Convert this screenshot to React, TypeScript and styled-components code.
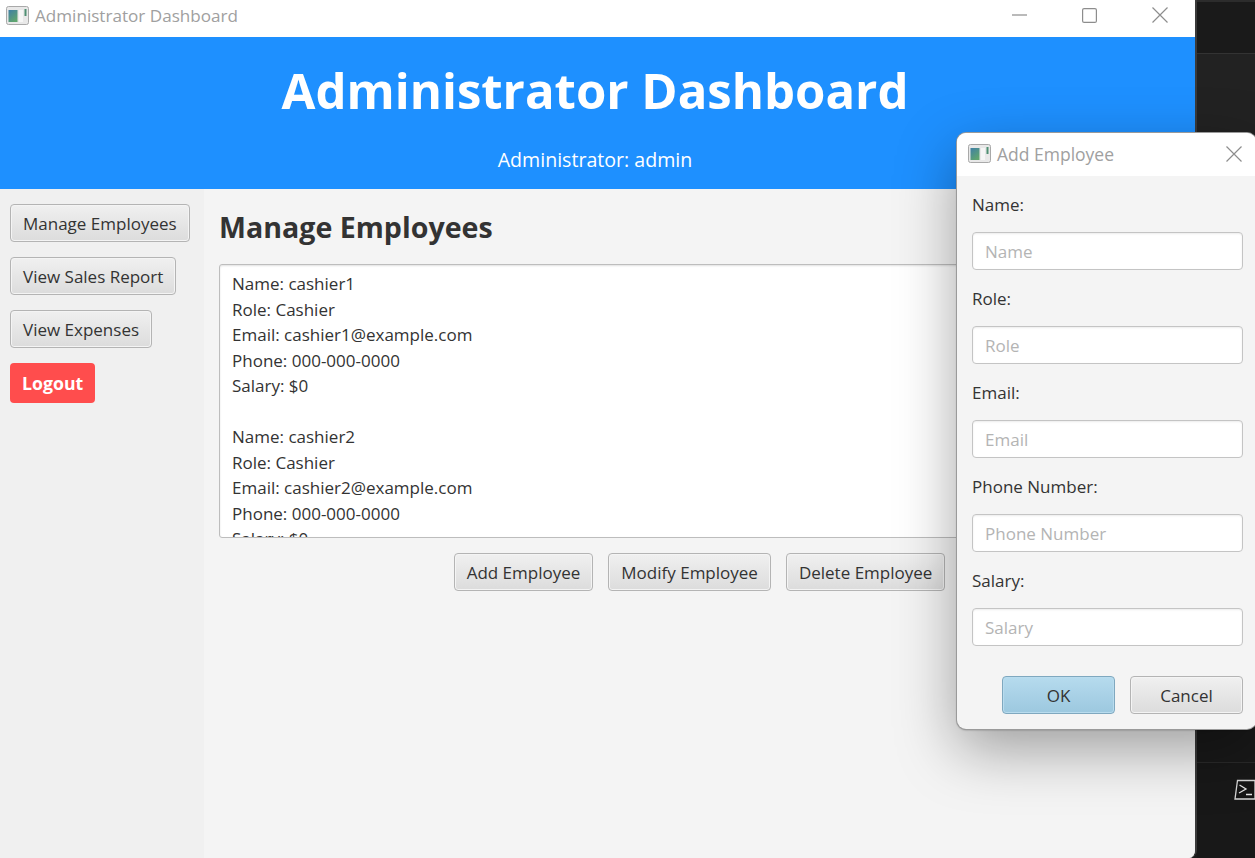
import styled, { createGlobalStyle } from "styled-components";

const GlobalStyle = createGlobalStyle`
  html, body {
    margin: 0;
    padding: 0;
    background: #1b1b1b;
  }
  * {
    box-sizing: border-box;
  }
`;

const FONT = `"Open Sans", "Noto Sans", "Liberation Sans", sans-serif`;

const employees = [
  { name: "cashier1", email: "cashier1@example.com" },
  { name: "cashier2", email: "cashier2@example.com" },
];

const fields = ["Name", "Role", "Email", "Phone Number", "Salary"];

function AppIcon() {
  return (
    <svg width="23" height="19" viewBox="0 0 23 19">
      <defs>
        <linearGradient id="appIconFill" x1="0" y1="0" x2="0.6" y2="1">
          <stop offset="0" stopColor="#3f7fa6" />
          <stop offset="1" stopColor="#5fa56f" />
        </linearGradient>
      </defs>
      <rect x="0.5" y="0.5" width="22" height="18" rx="2" fill="#e8e8e8" stroke="#a9a9a9" />
      <rect x="2.5" y="4" width="9" height="12" fill="url(#appIconFill)" />
      <rect x="13" y="4" width="4" height="12" fill="#f6f6f6" />
      <rect x="18.5" y="3" width="2" height="7" fill="#4f8f73" />
    </svg>
  );
}

function CloseIcon() {
  return (
    <svg width="16" height="16" viewBox="0 0 16 16">
      <path d="M0.5 0.5 L15.5 15.5 M15.5 0.5 L0.5 15.5" stroke="#8d8d8d" strokeWidth="1.2" fill="none" />
    </svg>
  );
}

function App() {
  return (
    <Screen>
      <GlobalStyle />
      <Window>
        <TitleBar>
          <TitleLeft>
            <AppIcon />
            <WindowTitle>Administrator Dashboard</WindowTitle>
          </TitleLeft>
          <WindowControls>
            <svg width="15" height="2" viewBox="0 0 15 2">
              <path d="M0 1 H15" stroke="#8d8d8d" strokeWidth="1.2" />
            </svg>
            <svg width="15" height="15" viewBox="0 0 15 15">
              <rect x="0.6" y="0.6" width="13.8" height="13.8" rx="1.5" stroke="#8d8d8d" strokeWidth="1.2" fill="none" />
            </svg>
            <CloseIcon />
          </WindowControls>
        </TitleBar>
        <Banner>
          <BannerTitle>Administrator Dashboard</BannerTitle>
          <BannerUser>Administrator: admin</BannerUser>
        </Banner>
        <Body>
          <Sidebar>
            <GrayButton>Manage Employees</GrayButton>
            <GrayButton>View Sales Report</GrayButton>
            <GrayButton>View Expenses</GrayButton>
            <LogoutButton>Logout</LogoutButton>
          </Sidebar>
          <Content>
            <Heading>Manage Employees</Heading>
            <ListBox>
              {employees.map((e) => (
                <Record key={e.name}>
                  <div>Name: {e.name}</div>
                  <div>Role: Cashier</div>
                  <div>Email: {e.email}</div>
                  <div>Phone: 000-000-0000</div>
                  <div>Salary: $0</div>
                </Record>
              ))}
            </ListBox>
            <ActionRow>
              <GrayButton>Add Employee</GrayButton>
              <GrayButton>Modify Employee</GrayButton>
              <GrayButton>Delete Employee</GrayButton>
            </ActionRow>
          </Content>
        </Body>
      </Window>
      <DarkSide>
        <DarkTop />
        <DarkMiddle />
        <DarkLower />
        <DarkBottom>
          <svg width="22" height="22" viewBox="0 0 22 22">
            <path d="M3.5 1.5 H21 V20 H1 Z" fill="#151515" stroke="#d6d6d6" strokeWidth="1.3" />
            <path d="M5.5 6 L12 10 L5 14 M12 15.5 H18" stroke="#e4e4e4" strokeWidth="1.3" fill="none" />
          </svg>
        </DarkBottom>
      </DarkSide>
      <Dialog>
        <DialogTitleBar>
          <TitleLeft>
            <AppIcon />
            <TitleText>Add Employee</TitleText>
          </TitleLeft>
          <CloseIcon />
        </DialogTitleBar>
        <DialogBody>
          {fields.map((f) => (
            <Field key={f}>
              <FieldLabel>{f}:</FieldLabel>
              <FieldInput placeholder={f} />
            </Field>
          ))}
          <DialogButtons>
            <OkButton>OK</OkButton>
            <DialogButton>Cancel</DialogButton>
          </DialogButtons>
        </DialogBody>
      </Dialog>
    </Screen>
  );
}

const Screen = styled.div`
  position: relative;
  display: flex;
  width: 1255px;
  height: 858px;
  overflow: hidden;
  font-family: ${FONT};
  color: #333;
`;

const Window = styled.div`
  display: flex;
  flex-direction: column;
  width: 1197px;
  height: 858px;
  background: #f4f4f4;
  border-right: 2px solid #3a3a3a;
  border-bottom-right-radius: 8px;
  overflow: hidden;
`;

const TitleBar = styled.div`
  display: flex;
  align-items: center;
  justify-content: space-between;
  height: 37px;
  padding: 0 27px 7px 6px;
  background: #fff;
`;

const TitleLeft = styled.div`
  display: flex;
  align-items: center;
  gap: 6px;
`;

const TitleText = styled.span`
  font-size: 17.5px;
  color: #a0a0a0;
`;

const WindowTitle = styled(TitleText)`
  font-size: 17.1px;
`;

const WindowControls = styled.div`
  display: flex;
  align-items: center;
  gap: 55px;
`;

const Banner = styled.div`
  display: flex;
  flex-direction: column;
  align-items: center;
  height: 152px;
  padding: 19px 5px 0 0;
  background: #1e90ff;
  color: #fff;
`;

const BannerTitle = styled.div`
  font-size: 49.1px;
  line-height: 68px;
  font-weight: 700;
`;

const BannerUser = styled.div`
  margin-top: 22px;
  font-size: 19.6px;
  line-height: 28px;
`;

const Body = styled.div`
  display: flex;
  flex: 1;
  min-height: 0;
`;

const Sidebar = styled.div`
  display: flex;
  flex-direction: column;
  align-items: flex-start;
  gap: 15px;
  width: 204px;
  padding: 15px 10px;
  background: #f0f0f0;
`;

const GrayButton = styled.button`
  height: 38px;
  padding: 0 12px;
  border: 1px solid #b4b4b4;
  border-radius: 4px;
  background: linear-gradient(#f0f0f0, #dcdcdc);
  box-shadow: inset 0 0 0 1px #f4f4f4;
  font-family: ${FONT};
  font-size: 17px;
  color: #333;
  white-space: nowrap;
`;

const LogoutButton = styled.button`
  height: 40px;
  padding: 0 12px;
  border: none;
  border-radius: 4px;
  background: #ff4d4d;
  font-family: ${FONT};
  font-size: 17.7px;
  font-weight: 700;
  color: #fff;
`;

const Content = styled.div`
  display: flex;
  flex-direction: column;
  flex: 1;
  min-width: 0;
  padding: 15px;
  background: #f4f4f4;
`;

const Heading = styled.h2`
  margin: 0 0 15px;
  height: 45px;
  font-size: 28.6px;
  line-height: 45px;
  font-weight: 700;
  color: #333;
`;

const ListBox = styled.div`
  height: 274px;
  padding: 6px 12px;
  overflow: hidden;
  background: #fff;
  border: 1px solid #bdbdbd;
  border-radius: 3px;
  box-shadow: inset 0 1px 2px rgba(0, 0, 0, 0.12);
  font-size: 17px;
  line-height: 25.5px;
`;

const Record = styled.div`
  margin-bottom: 25.5px;
`;

const ActionRow = styled.div`
  display: flex;
  justify-content: center;
  gap: 15px;
  margin-top: 15px;
`;

const DarkSide = styled.div`
  display: flex;
  flex-direction: column;
  flex: 1;
  background: #1b1b1b;
`;

const DarkTop = styled.div`
  height: 54px;
  background: #1a1a1a;
  border-top: 2px solid #2c2c2c;
  border-bottom: 1px solid #333;
`;

const DarkMiddle = styled.div`
  flex: 1;
  background: #222;
`;

const DarkLower = styled.div`
  height: 200px;
  background: #191919;
`;

const DarkBottom = styled.div`
  display: flex;
  justify-content: flex-end;
  height: 96px;
  padding-top: 16px;
  background: #181818;
  border-top: 1px solid #2a2a2a;
  & > svg {
    margin-right: -1px;
  }
`;

const Dialog = styled.div`
  position: absolute;
  top: 133px;
  left: 957px;
  display: flex;
  flex-direction: column;
  width: 299px;
  height: 596px;
  border-radius: 9px;
  overflow: hidden;
  background: #f4f4f4;
  box-shadow: 0 0 0 1px #9a9a9a, 0 1px 2px rgba(0, 0, 0, 0.4), 0 20px 60px rgba(0, 0, 0, 0.36);
`;

const DialogTitleBar = styled.div`
  display: flex;
  align-items: center;
  justify-content: space-between;
  height: 43px;
  padding: 0 14px 2px 11px;
  background: #fff;
`;

const DialogBody = styled.div`
  display: flex;
  flex-direction: column;
  flex: 1;
  padding: 15px 13px 15px 15px;
  gap: 15px;
`;

const Field = styled.div`
  display: flex;
  flex-direction: column;
  gap: 13px;
`;

const FieldLabel = styled.label`
  font-size: 17px;
  line-height: 27px;
  margin-bottom: 1px;
  color: #333;
`;

const FieldInput = styled.input`
  width: 271px;
  height: 38px;
  padding: 0 12px;
  border: 1px solid #c4c4c4;
  border-radius: 4px;
  background: #fff;
  box-shadow: inset 0 1px 2px rgba(0, 0, 0, 0.08);
  font-family: ${FONT};
  font-size: 17px;
  &::placeholder {
    color: #b4b4b4;
  }
`;

const DialogButtons = styled.div`
  display: flex;
  justify-content: flex-end;
  gap: 15px;
  margin-top: 15px;
`;

const DialogButton = styled(GrayButton)`
  width: 113px;
`;

const OkButton = styled(DialogButton)`
  border-color: #7fa8bf;
  background: linear-gradient(#b6dbee, #9cc8df);
  box-shadow: inset 0 0 0 1px #b9dcee;
`;

export default App;
